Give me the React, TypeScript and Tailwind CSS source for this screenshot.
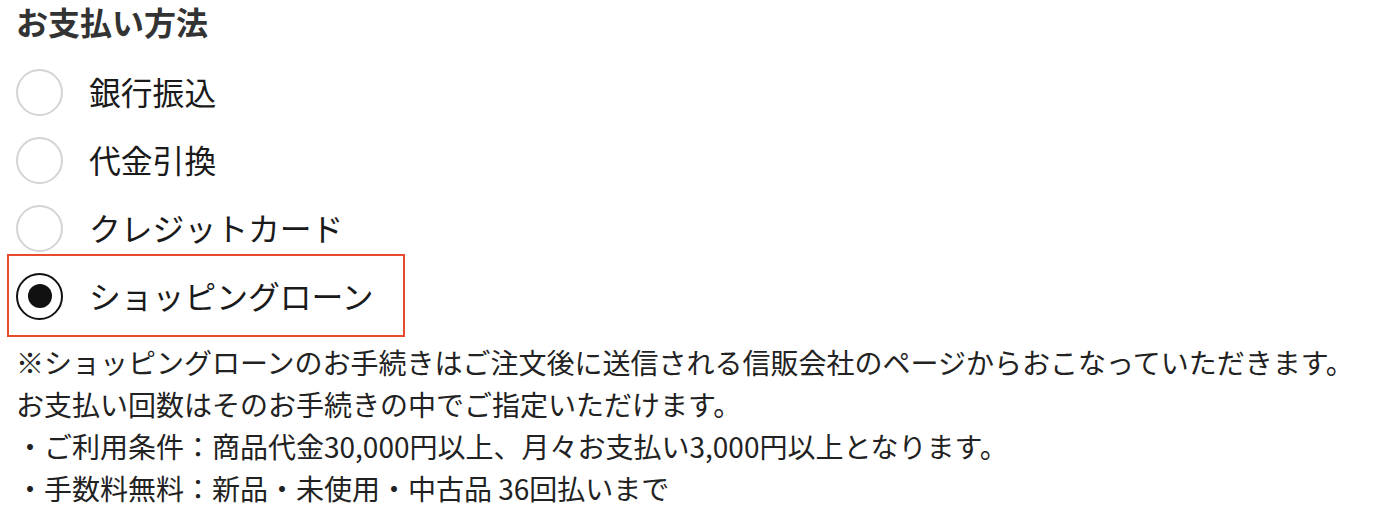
import { useState } from "react";

const options = ["銀行振込", "代金引換", "クレジットカード", "ショッピングローン"];

function Radio({ checked }: { checked: boolean }) {
  return (
    <span
      className={`flex h-[47px] w-[47px] shrink-0 items-center justify-center rounded-full border-2 bg-white ${
        checked ? "border-[#111]" : "border-[#d4d4d4]"
      }`}
    >
      {checked && <span className="h-[24px] w-[24px] rounded-full bg-[#111]" />}
    </span>
  );
}

export default function App() {
  const [selected, setSelected] = useState(3);

  return (
    <div className="min-h-screen bg-white px-4 font-['Noto_Sans_CJK_JP',sans-serif] text-[#1a1a1a]">
      <h2 className="text-[32px] font-bold leading-[42px] text-[#333]">お支払い方法</h2>

      <div className="mt-4 flex flex-col">
        {options.map((label, i) => (
          <label
            key={label}
            className="relative flex h-[68px] cursor-pointer items-center gap-[26px]"
            onClick={() => setSelected(i)}
          >
            <Radio checked={selected === i} />
            <span className="text-[31.8px] leading-none">{label}</span>
            {i === 3 && (
              <span className="pointer-events-none absolute -left-[9px] -top-[8px] h-[83px] w-[398px] border-[2.5px] border-[#e9492c]" />
            )}
          </label>
        ))}
      </div>

      <div className="mt-[11px] text-[28px] leading-[42px] text-[#222]">
        <p>※ショッピングローンのお手続きはご注文後に送信される信販会社のページからおこなっていただきます。</p>
        <p>お支払い回数はそのお手続きの中でご指定いただけます。</p>
        <p>・ご利用条件：商品代金30,000円以上、月々お支払い3,000円以上となります。</p>
        <p>・手数料無料：新品・未使用・中古品 36回払いまで</p>
      </div>
    </div>
  );
}
